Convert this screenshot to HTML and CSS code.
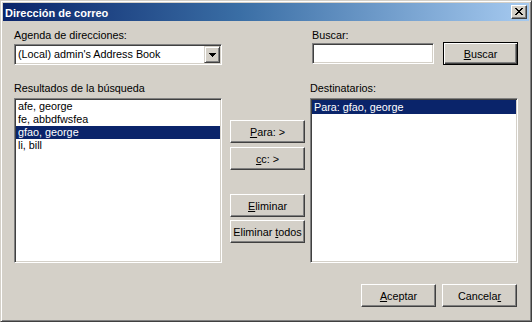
FILE: index.html
```html
<!DOCTYPE html>
<html lang="es">
<head>
    <meta charset="UTF-8">
    <title>Dirección de correo</title>
    <link rel="stylesheet" href="styles.css">
</head>
<body>
    <div class="dialog">
        <div class="titlebar">
            <span class="title">Dirección de correo</span>
            <button class="close-btn" title="Cerrar">
                <svg width="8" height="7" viewBox="0 0 8 7" shape-rendering="crispEdges">
                    <path d="M0 0h2v1h-2zM6 0h2v1h-2zM1 1h2v1h-2zM5 1h2v1h-2zM2 2h4v1h-4zM3 3h2v1h-2zM2 4h4v1h-4zM1 5h2v1h-2zM5 5h2v1h-2zM0 6h2v1h-2zM6 6h2v1h-2z" fill="#000"/>
                </svg>
            </button>
        </div>

        <div class="content">
            <div class="grid">
                <div class="group">
                    <label class="label">Agenda de direcciones:</label>
                    <div class="select field">
                        <span class="select-value">(Local) admin's Address Book</span>
                        <span class="select-arrow">
                            <svg width="7" height="4" viewBox="0 0 7 4" shape-rendering="crispEdges">
                                <path d="M0 0h7v1h-7zM1 1h5v1h-5zM2 2h3v1h-3zM3 3h1v1h-1z" fill="#000"/>
                            </svg>
                        </span>
                    </div>
                </div>
                <div></div>
                <div class="group search-group">
                    <label class="label">Buscar:</label>
                    <div class="search-row">
                        <input class="field search-input" type="text">
                        <button class="btn btn-default search-btn"><u>B</u>uscar</button>
                    </div>
                </div>

                <div class="group list-group">
                    <label class="label">Resultados de la búsqueda</label>
                    <ul class="listbox field">
                        <li>afe, george</li>
                        <li>fe, abbdfwsfea</li>
                        <li class="selected">gfao, george</li>
                        <li>li, bill</li>
                    </ul>
                </div>
                <div class="actions">
                    <button class="btn"><u>P</u>ara: &gt;</button>
                    <button class="btn"><u>c</u>c: &gt;</button>
                    <button class="btn btn-gap"><u>E</u>liminar</button>
                    <button class="btn btn-tight">Eliminar <u>t</u>odos</button>
                </div>
                <div class="group list-group">
                    <label class="label">Destinatarios:</label>
                    <ul class="listbox field">
                        <li class="selected first">Para: gfao, george</li>
                    </ul>
                </div>
            </div>

            <div class="footer">
                <button class="btn"><u>A</u>ceptar</button>
                <button class="btn">Cancela<u>r</u></button>
            </div>
        </div>
    </div>
</body>
</html>
```

FILE: styles.css
```css
:root {
    --face: #d4d0c8;
    --shadow: #808080;
    --dark: #404040;
    --light: #ffffff;
    --select: #0a246a;
}

* {
    margin: 0;
    padding: 0;
    box-sizing: border-box;
}

body {
    background: var(--face);
    font-family: "Liberation Sans", Arial, sans-serif;
    font-size: 10.8px;
    color: #000;
}

.dialog {
    width: 532px;
    height: 322px;
    background: var(--face);
    border: 1px solid;
    border-color: var(--face) var(--dark) var(--dark) var(--face);
    box-shadow: inset 1px 1px var(--light), inset -1px -1px var(--shadow);
    padding: 2px;
}

/* Title bar */
.titlebar {
    height: 18px;
    display: flex;
    align-items: center;
    justify-content: space-between;
    padding: 0 2px;
    background: linear-gradient(to right, #0a246a 0%, #3a6ea5 45%, #a6caf0 100%);
}

.title {
    color: #fff;
    font-weight: bold;
    font-size: 11px;
    line-height: 18px;
    padding-top: 1px;
}

.close-btn {
    width: 16px;
    height: 14px;
    display: flex;
    align-items: center;
    justify-content: center;
    background: var(--face);
    border: 1px solid;
    border-color: var(--light) var(--dark) var(--dark) var(--light);
    box-shadow: inset -1px -1px var(--shadow);
    padding-bottom: 1px;
}

/* Body */
.content {
    padding: 8px 11px 0 11px;
}

.grid {
    display: grid;
    grid-template-columns: 208px 88px 208px;
    grid-template-rows: 38px auto;
    row-gap: 15px;
}

.group {
    display: flex;
    flex-direction: column;
}

.label {
    line-height: 13px;
    height: 13px;
    white-space: nowrap;
}

.field {
    background: #fff;
    border: 1px solid;
    border-color: var(--shadow) var(--light) var(--light) var(--shadow);
    box-shadow: inset 1px 1px var(--dark), inset -1px -1px var(--face);
    padding: 1px;
}

/* Dropdown */
.select {
    margin-top: 2px;
    height: 21px;
    display: flex;
    align-items: stretch;
}

.select-value {
    flex: 1;
    padding-left: 2px;
    line-height: 17px;
    white-space: nowrap;
}

.select-arrow {
    width: 16px;
    display: flex;
    align-items: center;
    justify-content: center;
    background: var(--face);
    border: 1px solid;
    border-color: var(--face) var(--dark) var(--dark) var(--face);
    box-shadow: inset 1px 1px var(--light), inset -1px -1px var(--shadow);
}

/* Search */
.search-group {
    padding-left: 2px;
}

.search-row {
    display: flex;
    align-items: flex-start;
    gap: 9px;
}

.search-input {
    width: 122px;
    height: 21px;
    margin-top: 1px;
    outline: none;
    font: inherit;
}

.search-btn {
    width: 76px;
    height: 24px;
}

/* Buttons */
.btn {
    height: 23px;
    background: var(--face);
    font: inherit;
    color: #000;
    border: 1px solid;
    border-color: var(--light) var(--dark) var(--dark) var(--light);
    box-shadow: inset -1px -1px var(--shadow);
    white-space: nowrap;
    cursor: default;
}

.btn-default {
    border-color: #000;
    box-shadow: inset 1px 1px var(--light), inset -1px -1px var(--dark), inset -2px -2px var(--shadow);
}

.actions {
    display: flex;
    flex-direction: column;
    gap: 4px;
    padding: 38px 5px 0 8px;
}

.actions .btn {
    width: 75px;
}

.actions .btn-gap {
    margin-top: 20px;
}

.actions .btn-tight {
    margin-top: -1px;
}

/* Lists */
.list-group .label {
    margin-bottom: 3px;
}

.listbox {
    list-style: none;
    height: 165px;
    overflow: hidden;
}

.listbox li {
    line-height: 13px;
    height: 13px;
    padding-left: 2px;
    white-space: nowrap;
}

.listbox li.selected {
    background: var(--select);
    color: #fff;
}

.listbox li.first {
    height: 14px;
    line-height: 14px;
}

/* Footer */
.footer {
    display: flex;
    justify-content: flex-end;
    gap: 6px;
    margin-top: 21px;
    padding-right: 1px;
}

.footer .btn {
    width: 75px;
}
```
